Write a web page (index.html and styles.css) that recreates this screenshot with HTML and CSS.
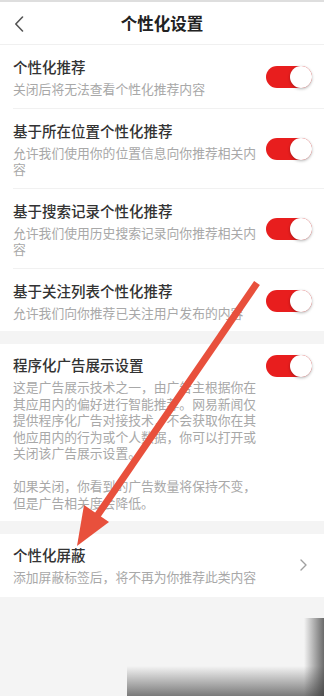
FILE: index.html
```html
<!DOCTYPE html>
<html lang="zh-CN">
<head>
<meta charset="utf-8">
<title>个性化设置</title>
<link rel="stylesheet" href="styles.css">
</head>
<body>
<div class="page">
  <header class="nav">
    <span class="back">
      <svg width="10" height="16" viewBox="0 0 10 16"><path d="M8.5 1 L1.8 8 L8.5 15" fill="none" stroke="#555" stroke-width="1.6" stroke-linecap="round" stroke-linejoin="round"/></svg>
    </span>
    <h1 class="nav-title">个性化设置</h1>
  </header>

  <section class="group">
    <div class="row">
      <div class="text">
        <div class="title">个性化推荐</div>
        <div class="sub">关闭后将无法查看个性化推荐内容</div>
      </div>
      <span class="switch"><span class="knob"></span></span>
    </div>
    <div class="row">
      <div class="text">
        <div class="title">基于所在位置个性化推荐</div>
        <div class="sub">允许我们使用你的位置信息向你推荐相关内容</div>
      </div>
      <span class="switch"><span class="knob"></span></span>
    </div>
    <div class="row">
      <div class="text">
        <div class="title">基于搜索记录个性化推荐</div>
        <div class="sub">允许我们使用历史搜索记录向你推荐相关内容</div>
      </div>
      <span class="switch"><span class="knob"></span></span>
    </div>
    <div class="row last">
      <div class="text">
        <div class="title">基于关注列表个性化推荐</div>
        <div class="sub">允许我们向你推荐已关注用户发布的内容</div>
      </div>
      <span class="switch"><span class="knob"></span></span>
    </div>
  </section>

  <section class="group">
    <div class="row last top">
      <div class="text">
        <div class="title">程序化广告展示设置</div>
        <div class="sub">这是广告展示技术之一，由广告主根据你在其应用内的偏好进行智能推荐。网易新闻仅提供程序化广告对接技术，不会获取你在其他应用内的行为或个人数据，你可以打开或关闭该广告展示设置。</div>
        <div class="sub gap">如果关闭，你看到的广告数量将保持不变，但是广告相关度会降低。</div>
      </div>
      <span class="switch"><span class="knob"></span></span>
    </div>
  </section>

  <section class="group">
    <div class="row last six">
      <div class="text">
        <div class="title">个性化屏蔽</div>
        <div class="sub wide">添加屏蔽标签后，将不再为你推荐此类内容</div>
      </div>
      <span class="chev">
        <svg width="7" height="12" viewBox="0 0 7 12"><path d="M1 1 L6 6 L1 11" fill="none" stroke="#a0a0a0" stroke-width="1.4" stroke-linecap="round" stroke-linejoin="round"/></svg>
      </span>
    </div>
  </section>

  <div class="shade"></div>

  <svg class="arrow" width="324" height="696" viewBox="0 0 324 696">
    <line x1="257" y1="283" x2="97" y2="516" stroke="#e8503c" stroke-width="7" stroke-linecap="butt"/>
    <polygon points="77,546 84,505 109,522" fill="#e8503c"/>
  </svg>
</div>
</body>
</html>
```

FILE: styles.css
```css
* { box-sizing: border-box; }
html, body { margin: 0; padding: 0; }
body {
  background: #f4f4f4;
  font-family: "Noto Sans CJK SC", "Noto Sans", sans-serif;
  color: #333;
}
.page {
  position: relative;
  width: 324px;
  min-height: 696px;
  overflow: hidden;
}
.nav {
  position: relative;
  height: 45px;
  background: #fff;
  border-top: 2px solid #dedede;
  border-bottom: 1px solid #f0f0f0;
  display: flex;
  align-items: center;
  justify-content: center;
}
.back {
  position: absolute;
  left: 14px;
  top: 14px;
  display: flex;
}
.nav-title {
  margin: 0;
  font-size: 16.5px;
  font-weight: 700;
  color: #222;
  line-height: 20px;
}
.group {
  background: #fff;
  padding-left: 13px;
  margin-bottom: 13px;
}
.row {
  display: flex;
  align-items: center;
  justify-content: space-between;
  padding: 12px 12px 10px 0;
  border-bottom: 1px solid #f1f1f1;
}
.row.last { border-bottom: none; }
.row.top { align-items: flex-start; padding-top: 11px; }
.row.six { padding-top: 11px; padding-bottom: 11px; }
.text { width: 247px; }
.title {
  font-size: 14.5px;
  line-height: 20px;
  font-weight: 500;
  color: #333;
}
.sub {
  margin-top: 4px;
  font-size: 12.8px;
  line-height: 16.5px;
  color: #a8a8a8;
}
.sub.gap { margin-top: 16.5px; }
.sub.wide { width: 270px; }
.switch {
  position: relative;
  flex: none;
  width: 46px;
  height: 22px;
  border-radius: 11px;
  background: #e81e1e;
}
.knob {
  position: absolute;
  right: 0;
  top: 0;
  width: 22px;
  height: 22px;
  border-radius: 50%;
  background: #fff;
  box-shadow: 0 1px 3px rgba(0,0,0,0.3);
}
.chev {
  display: flex;
  margin-right: 5px;
}
.shade {
  position: absolute;
  left: 127px;
  top: 618px;
  right: 0;
  bottom: 0;
  background:
    linear-gradient(to left, rgba(60,60,60,0.75), rgba(60,60,60,0) 20px),
    linear-gradient(to top, rgba(70,70,70,0.7), rgba(70,70,70,0) 30px);
}
.arrow {
  position: absolute;
  left: 0;
  top: 0;
  pointer-events: none;
}
```
